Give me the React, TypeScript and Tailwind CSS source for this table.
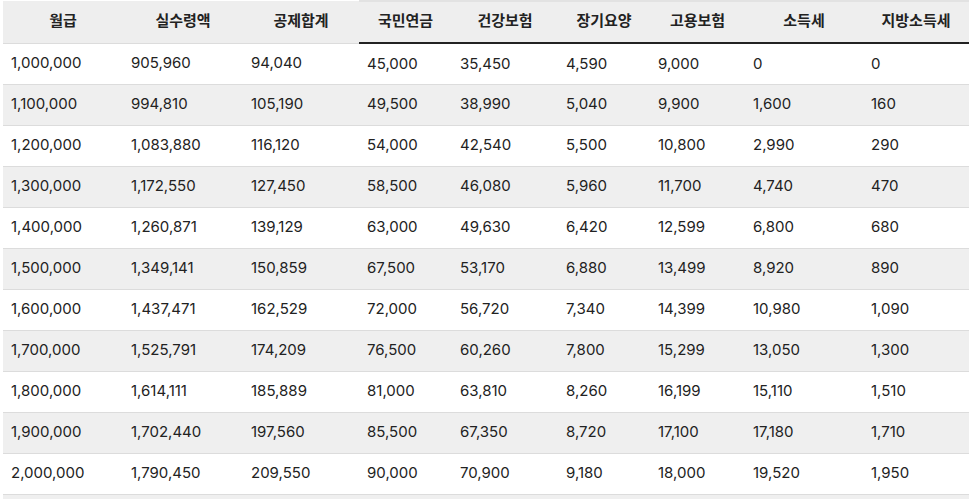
const columns = [
  { title: "월급", width: "w-[120px]" },
  { title: "실수령액", width: "w-[120px]" },
  { title: "공제합계", width: "w-[116px]" },
  { title: "국민연금", width: "w-[93px]" },
  { title: "건강보험", width: "w-[106px]" },
  { title: "장기요양", width: "w-[92px]" },
  { title: "고용보험", width: "w-[95px]" },
  { title: "소득세", width: "w-[118px]" },
  { title: "지방소득세", width: "w-[106px]" },
];

const rows = [
  ["1,000,000", "905,960", "94,040", "45,000", "35,450", "4,590", "9,000", "0", "0"],
  ["1,100,000", "994,810", "105,190", "49,500", "38,990", "5,040", "9,900", "1,600", "160"],
  ["1,200,000", "1,083,880", "116,120", "54,000", "42,540", "5,500", "10,800", "2,990", "290"],
  ["1,300,000", "1,172,550", "127,450", "58,500", "46,080", "5,960", "11,700", "4,740", "470"],
  ["1,400,000", "1,260,871", "139,129", "63,000", "49,630", "6,420", "12,599", "6,800", "680"],
  ["1,500,000", "1,349,141", "150,859", "67,500", "53,170", "6,880", "13,499", "8,920", "890"],
  ["1,600,000", "1,437,471", "162,529", "72,000", "56,720", "7,340", "14,399", "10,980", "1,090"],
  ["1,700,000", "1,525,791", "174,209", "76,500", "60,260", "7,800", "15,299", "13,050", "1,300"],
  ["1,800,000", "1,614,111", "185,889", "81,000", "63,810", "8,260", "16,199", "15,110", "1,510"],
  ["1,900,000", "1,702,440", "197,560", "85,500", "67,350", "8,720", "17,100", "17,180", "1,710"],
  ["2,000,000", "1,790,450", "209,550", "90,000", "70,900", "9,180", "18,000", "19,520", "1,950"],
];

export default function App() {
  return (
    <div className="h-[499px] overflow-hidden bg-white pl-[3px] font-['Inter','Noto_Sans_CJK_KR',sans-serif] text-[15px] text-[#222]">
      <table className="table-fixed border-collapse">
        <thead>
          <tr className="h-[42px] bg-[#eeeeee]">
            {columns.map((col, i) => (
              <th
                key={col.title}
                className={`${col.width} p-0 pb-[3px] text-center align-middle font-['Noto_Sans_CJK_KR',sans-serif] text-[15px] font-bold text-[#222] ${
                  i >= 3
                    ? "border-t-2 border-t-[#e2e2e2] border-b-2 border-b-[#222]"
                    : "border-b border-b-[#dcdcdc]"
                }`}
              >
                {col.title}
              </th>
            ))}
          </tr>
        </thead>
        <tbody>
          {rows.map((row, r) => (
            <tr
              key={row[0]}
              className={`h-[41px] border-b border-b-[#dcdcdc] ${r % 2 === 0 ? "bg-white" : "bg-[#efefef]"}`}
            >
              {row.map((cell, c) => (
                <td key={c} className="py-0 pl-[8px] pr-2 text-left align-middle">
                  {cell}
                </td>
              ))}
            </tr>
          ))}
          <tr className="h-[41px] bg-[#efefef]">
            {columns.map((col) => (
              <td key={col.title} className="p-0" />
            ))}
          </tr>
        </tbody>
      </table>
    </div>
  );
}
